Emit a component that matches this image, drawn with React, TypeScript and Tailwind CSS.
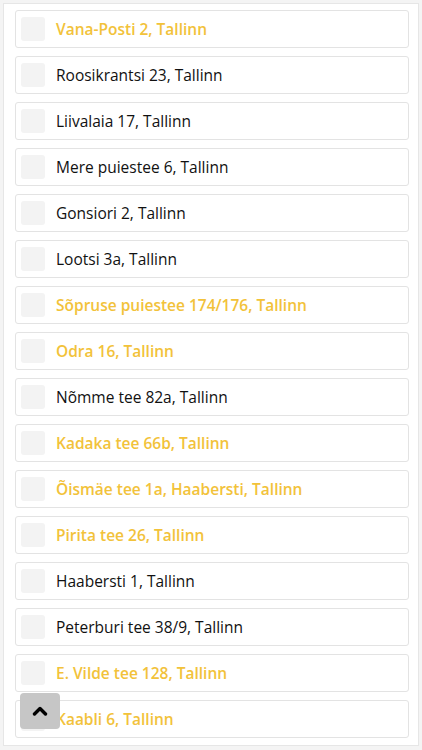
import React from 'react';

const addresses: { name: string; active: boolean }[] = [
  { name: 'Vana-Posti 2, Tallinn', active: true },
  { name: 'Roosikrantsi 23, Tallinn', active: false },
  { name: 'Liivalaia 17, Tallinn', active: false },
  { name: 'Mere puiestee 6, Tallinn', active: false },
  { name: 'Gonsiori 2, Tallinn', active: false },
  { name: 'Lootsi 3a, Tallinn', active: false },
  { name: 'Sõpruse puiestee 174/176, Tallinn', active: true },
  { name: 'Odra 16, Tallinn', active: true },
  { name: 'Nõmme tee 82a, Tallinn', active: false },
  { name: 'Kadaka tee 66b, Tallinn', active: true },
  { name: 'Õismäe tee 1a, Haabersti, Tallinn', active: true },
  { name: 'Pirita tee 26, Tallinn', active: true },
  { name: 'Haabersti 1, Tallinn', active: false },
  { name: 'Peterburi tee 38/9, Tallinn', active: false },
  { name: 'E. Vilde tee 128, Tallinn', active: true },
  { name: 'Kaabli 6, Tallinn', active: true },
];

const App: React.FC = () => {
  return (
    <div className="min-h-screen bg-[#f4f4f4] p-[3px] pb-[5px] font-['Open_Sans',sans-serif]">
      <div className="relative border border-[#e6e6e6] bg-white pl-[11px] pr-[9px] pt-[6px] pb-[7px]">
        <div className="flex flex-col gap-[8px]">
          {addresses.map((a) => (
            <div
              key={a.name}
              className="flex h-[38px] items-center rounded-[3px] border border-[#e3e3e3] bg-white pl-[5px]"
            >
              <span className="h-[24px] w-[24px] shrink-0 rounded-[3px] bg-[#f3f3f3]" />
              <span
                className={
                  a.active
                    ? 'ml-[11px] mt-[2px] text-[15.5px] font-semibold text-[#f2c23a]'
                    : 'ml-[11px] mt-[2px] text-[15.5px] text-[#111111]'
                }
              >
                {a.name}
              </span>
            </div>
          ))}
        </div>
        <button className="absolute bottom-[16px] left-[16px] flex h-[36px] w-[40px] items-center justify-center rounded-[4px] bg-[#c6c6c6]">
          <svg width="16" height="10" viewBox="0 0 16 10" fill="none">
            <path d="M2.5 8 L8 2.5 L13.5 8" stroke="#000" strokeWidth="3.4" strokeLinecap="round" strokeLinejoin="round" />
          </svg>
        </button>
      </div>
    </div>
  );
};

export default App;
